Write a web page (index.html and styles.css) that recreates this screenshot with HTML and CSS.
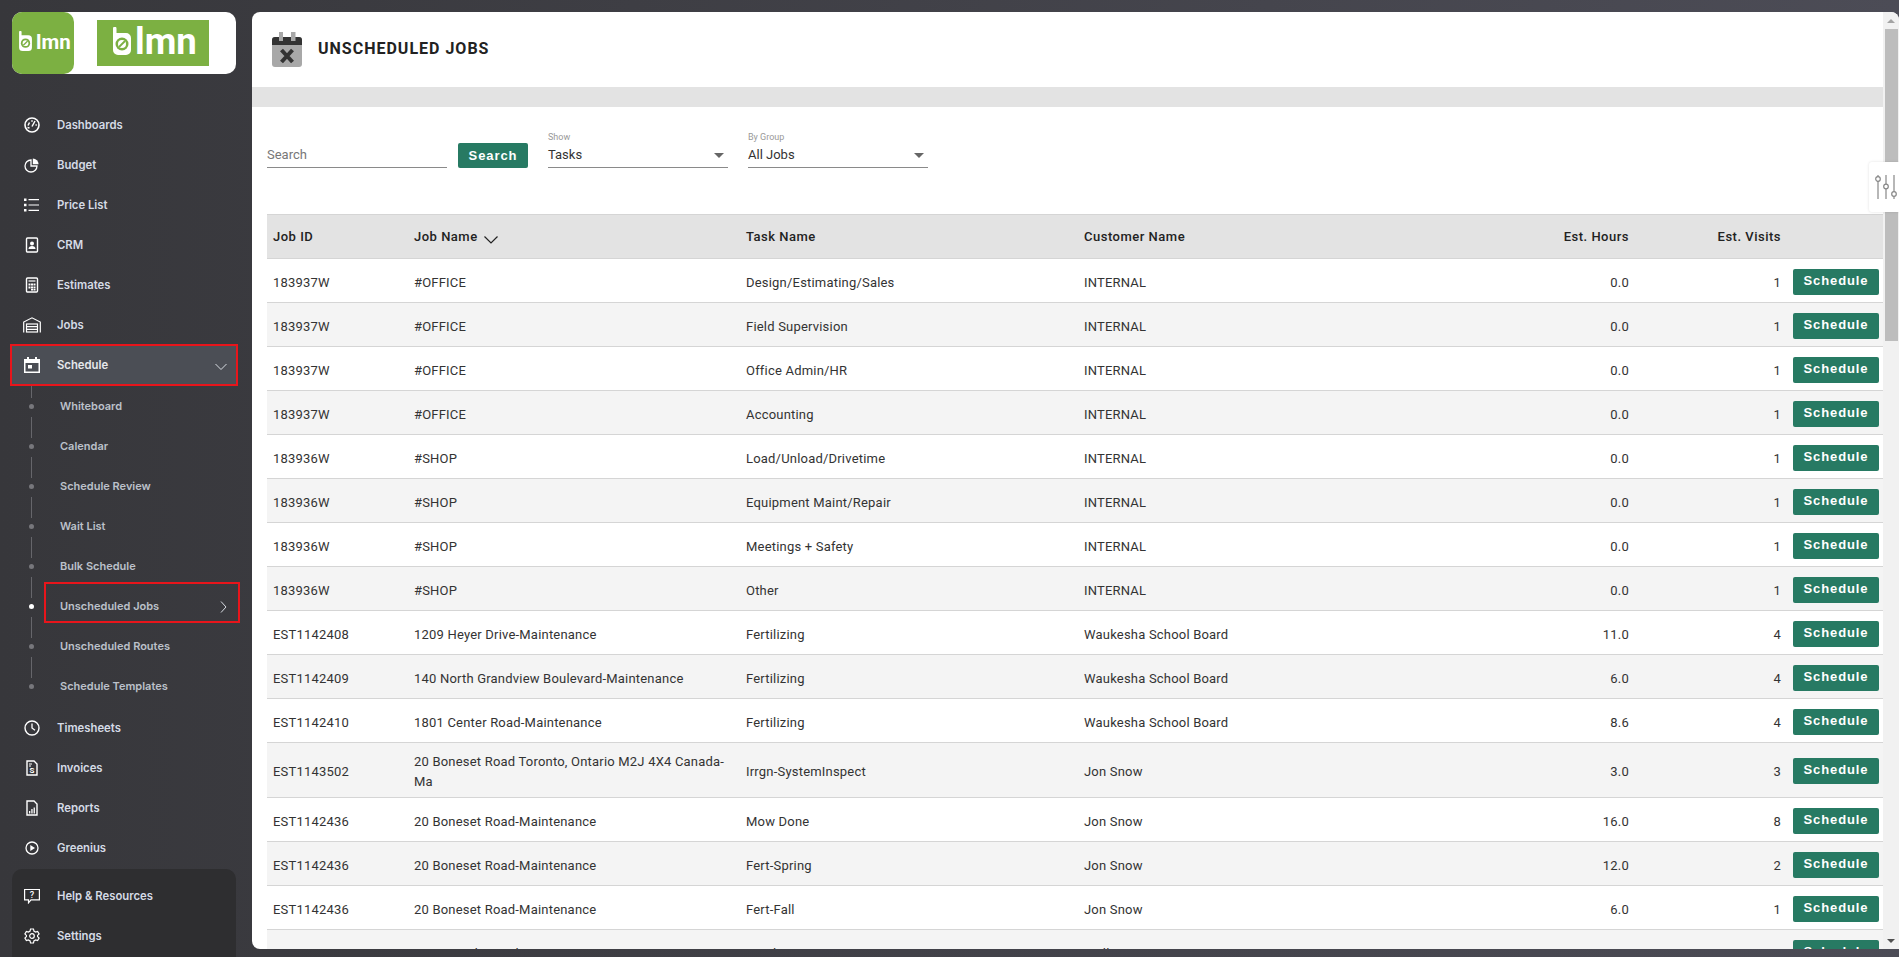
FILE: index.html
```html
<!DOCTYPE html>
<html lang="en">
<head>
    <meta charset="UTF-8">
    <meta name="viewport" content="width=device-width, initial-scale=1.0">
    <title>Unscheduled Jobs</title>
    <link rel="stylesheet" href="styles.css">
</head>
<body>
    <aside class="sidebar">
        <div class="logo-card">
            <div class="logo-square">
                <svg class="logo-b-small" viewBox="0 0 18 28"><path fill="#fff" d="M0 1.500a1.750 1.750 0 0 1 3.500 0V6H13a5 5 0 0 1 5 5v12a5 5 0 0 1-5 5H5a5 5 0 0 1-5-5z"/><circle cx="9" cy="17" r="6.500" fill="#7cb042"/><circle cx="9" cy="17" r="4" fill="#fff"/><path stroke="#7cb042" stroke-width="1.800" d="M6 20l6-6"/></svg>
                <span class="logo-text-small">lmn</span>
            </div>
            <div class="logo-wide">
                <svg class="logo-b-large" viewBox="0 0 18 28"><path fill="#fff" d="M0 1.500a1.750 1.750 0 0 1 3.500 0V6H13a5 5 0 0 1 5 5v12a5 5 0 0 1-5 5H5a5 5 0 0 1-5-5z"/><circle cx="9" cy="17" r="6.500" fill="#7cb042"/><circle cx="9" cy="17" r="4" fill="#fff"/><path stroke="#7cb042" stroke-width="1.800" d="M6 20l6-6"/></svg>
                <span class="logo-text-large">lmn</span>
            </div>
        </div>

        <nav class="nav">
            <a class="nav-item"><svg class="nav-icon" viewBox="0 0 16 16"><circle cx="8" cy="8" r="7" fill="none" stroke="#fff" stroke-width="1.600"/><path fill="none" stroke="#fff" stroke-width="1.500" d="M8 9.500l3-5.500M4 8.500l1.500-3M8 3.200v1.500M12.800 8h-1.300M3.500 10.500l2 .5"/></svg>Dashboards</a>
            <a class="nav-item"><svg class="nav-icon" viewBox="0 0 16 16"><path fill="none" stroke="#fff" stroke-width="1.300" d="M7 3a6 6 0 1 0 6 6H7z"/><path fill="#fff" d="M8.800 1.500a6 6 0 0 1 5.800 5.800H8.800z"/></svg>Budget</a>
            <a class="nav-item"><svg class="nav-icon" viewBox="0 0 16 16"><path fill="#fff" d="M0 1.500h2.500v2.500H0zM0 6.800h2.500v2.500H0zM0 12h2.500v2.500H0z"/><path stroke="#fff" stroke-width="1.200" d="M4.500 2.700H15M4.500 8H15M4.500 13.300H15"/></svg>Price List</a>
            <a class="nav-item"><svg class="nav-icon" viewBox="0 0 16 16"><rect x="2.500" y="1" width="11" height="14" rx="1" fill="none" stroke="#fff" stroke-width="1.400"/><circle cx="8" cy="6.500" r="2" fill="#fff"/><path fill="#fff" d="M4.500 12c0-2 1.500-3 3.500-3s3.500 1 3.500 3z"/></svg>CRM</a>
            <a class="nav-item"><svg class="nav-icon" viewBox="0 0 16 16"><rect x="2.500" y="1" width="11" height="14" rx="1" fill="none" stroke="#fff" stroke-width="1.400"/><path stroke="#fff" stroke-width="1.200" d="M4.500 4h7"/><path fill="#fff" d="M4.500 6.500h2v2h-2zM7 6.500h2v2H7zM9.500 6.500h2v2h-2zM4.500 9.500h2v2h-2zM7 9.500h2v2H7zM9.500 9.500h2v2h-2zM7 12h2v1.500H7zM9.500 12h2v1.500h-2z"/></svg>Estimates</a>
            <a class="nav-item"><svg class="nav-icon nav-icon-wide" viewBox="0 0 18 16"><path fill="none" stroke="#fff" stroke-width="1.200" d="M.7 15.500V5L9 .8 17.300 5v10.500"/><rect x="3.500" y="7" width="11" height="8" fill="none" stroke="#fff" stroke-width="1.200"/><path stroke="#fff" stroke-width="1.200" d="M3.500 9.700h11M3.500 12.300h11"/></svg>Jobs</a>

            <a class="nav-item nav-active"><svg class="nav-icon" viewBox="0 0 16 16"><path fill="#fff" d="M3 0h2v2h6V0h2v2h3v14H0V2h3zM1.500 6v8.500h13V6z"/><rect x="4" y="8" width="4" height="3.500" fill="#fff"/></svg>Schedule
                <svg class="nav-chevron-down" viewBox="0 0 12 8"><path fill="none" stroke="#d8dce3" stroke-width="1" d="M.5 1L6 6.500 11.500 1"/></svg>
            </a>
            <a class="sub-item">Whiteboard</a>
            <a class="sub-item">Calendar</a>
            <a class="sub-item">Schedule Review</a>
            <a class="sub-item">Wait List</a>
            <a class="sub-item">Bulk Schedule</a>
            <a class="sub-item sub-current">Unscheduled Jobs
                <svg class="sub-chevron" viewBox="0 0 7 12"><path fill="none" stroke="#d8dce3" stroke-width="1" d="M1 .5L6 6l-5 5.500"/></svg>
                <span class="mark-box"></span>
            </a>
            <a class="sub-item">Unscheduled Routes</a>
            <a class="sub-item">Schedule Templates</a>

            <a class="nav-item nav-after-sub"><svg class="nav-icon" viewBox="0 0 16 16"><circle cx="8" cy="8" r="7" fill="none" stroke="#fff" stroke-width="1.400"/><path fill="none" stroke="#fff" stroke-width="1.300" d="M8 3.500V8l3 2.200"/></svg>Timesheets</a>
            <a class="nav-item"><svg class="nav-icon" viewBox="0 0 16 16"><path fill="none" stroke="#fff" stroke-width="1.400" d="M3 1h7l3 3v11H3z"/><text class="icon-dollar" x="8" y="13" text-anchor="middle">S</text><path stroke="#fff" d="M5 4h3M5 6h2"/></svg>Invoices</a>
            <a class="nav-item"><svg class="nav-icon" viewBox="0 0 16 16"><path fill="none" stroke="#fff" stroke-width="1.400" d="M3 1h7l3 3v11H3z"/><path fill="#fff" d="M5 11h1.300v2.500H5zM7.300 9h1.300v4.500H7.300zM9.600 7.500h1.300v6H9.600z"/></svg>Reports</a>
            <a class="nav-item"><svg class="nav-icon" viewBox="0 0 16 16"><circle cx="8" cy="8" r="6" fill="none" stroke="#fff" stroke-width="1.300"/><path fill="#fff" d="M6.300 5l4.700 3-4.700 3z"/></svg>Greenius</a>
        </nav>

        <div class="nav-bottom">
            <a class="nav-item"><svg class="nav-icon" viewBox="0 0 16 16"><path fill="none" stroke="#fff" stroke-width="1.200" d="M.6 1.500h14.800v10.300H7l-2.500 3v-3H.6z"/><text class="icon-help" x="8" y="9.500" text-anchor="middle">?</text></svg>Help &amp; Resources</a>
            <a class="nav-item"><svg class="nav-icon" viewBox="0 0 16 16"><path fill="none" stroke="#fff" stroke-width="1.200" d="M6.500 1h3l.4 2 1.700 1 2-.6 1.500 2.600-1.500 1.400v1.200l1.500 1.400-1.500 2.600-2-.6-1.700 1-.4 2h-3l-.4-2-1.700-1-2 .6L.9 10.000l1.500-1.400V7.400L.9 6l1.500-2.600 2 .6 1.700-1z"/><circle cx="8" cy="8" r="2.300" fill="none" stroke="#fff" stroke-width="1.200"/></svg>Settings</a>
        </div>
    </aside>

    <main class="main">
        <div class="content">
            <header class="page-header">
                <svg class="page-icon" viewBox="0 0 30 35"><rect x="0" y="5" width="30" height="30" rx="3" fill="#a8a8a8"/><path fill="#333" d="M0 13V8a3 3 0 0 1 3-3h24a3 3 0 0 1 3 3v5z"/><path fill="#a8a8a8" d="M7 0h4v9H7zM19 0h4.500v9H19z"/><path stroke="#333" stroke-width="4" d="M9.500 18l11 12M20.500 18l-11 12"/></svg>
                <h1 class="page-title">Unscheduled Jobs</h1>
            </header>
            <div class="band"></div>

            <div class="filters">
                <div class="field field-search"><div class="field-value field-placeholder">Search</div></div>
                <button class="btn btn-search">Search</button>
                <div class="field">
                    <label class="field-label">Show</label>
                    <div class="field-value">Tasks<span class="caret"></span></div>
                </div>
                <div class="field">
                    <label class="field-label">By Group</label>
                    <div class="field-value">All Jobs<span class="caret"></span></div>
                </div>
            </div>

            <table class="jobs">
                <colgroup>
                    <col class="col-id"><col class="col-name"><col class="col-task"><col class="col-customer"><col class="col-hours"><col class="col-visits"><col class="col-action">
                </colgroup>
                <thead>
                    <tr>
                        <th>Job ID</th>
                        <th>Job Name <svg class="sort-icon" viewBox="0 0 14 8"><path fill="none" stroke="#222" stroke-width="1.200" d="M.5.500L7 7 13.500.500"/></svg></th>
                        <th>Task Name</th>
                        <th>Customer Name</th>
                        <th class="num">Est. Hours</th>
                        <th class="num">Est. Visits</th>
                        <th></th>
                    </tr>
                </thead>
                <tbody>
                    <tr><td>183937W</td><td>#OFFICE</td><td>Design/Estimating/Sales</td><td>INTERNAL</td><td class="num">0.0</td><td class="num">1</td><td><button class="btn btn-row">Schedule</button></td></tr>
                    <tr><td>183937W</td><td>#OFFICE</td><td>Field Supervision</td><td>INTERNAL</td><td class="num">0.0</td><td class="num">1</td><td><button class="btn btn-row">Schedule</button></td></tr>
                    <tr><td>183937W</td><td>#OFFICE</td><td>Office Admin/HR</td><td>INTERNAL</td><td class="num">0.0</td><td class="num">1</td><td><button class="btn btn-row">Schedule</button></td></tr>
                    <tr><td>183937W</td><td>#OFFICE</td><td>Accounting</td><td>INTERNAL</td><td class="num">0.0</td><td class="num">1</td><td><button class="btn btn-row">Schedule</button></td></tr>
                    <tr><td>183936W</td><td>#SHOP</td><td>Load/Unload/Drivetime</td><td>INTERNAL</td><td class="num">0.0</td><td class="num">1</td><td><button class="btn btn-row">Schedule</button></td></tr>
                    <tr><td>183936W</td><td>#SHOP</td><td>Equipment Maint/Repair</td><td>INTERNAL</td><td class="num">0.0</td><td class="num">1</td><td><button class="btn btn-row">Schedule</button></td></tr>
                    <tr><td>183936W</td><td>#SHOP</td><td>Meetings + Safety</td><td>INTERNAL</td><td class="num">0.0</td><td class="num">1</td><td><button class="btn btn-row">Schedule</button></td></tr>
                    <tr><td>183936W</td><td>#SHOP</td><td>Other</td><td>INTERNAL</td><td class="num">0.0</td><td class="num">1</td><td><button class="btn btn-row">Schedule</button></td></tr>
                    <tr><td>EST1142408</td><td>1209 Heyer Drive-Maintenance</td><td>Fertilizing</td><td>Waukesha School Board</td><td class="num">11.0</td><td class="num">4</td><td><button class="btn btn-row">Schedule</button></td></tr>
                    <tr><td>EST1142409</td><td>140 North Grandview Boulevard-Maintenance</td><td>Fertilizing</td><td>Waukesha School Board</td><td class="num">6.0</td><td class="num">4</td><td><button class="btn btn-row">Schedule</button></td></tr>
                    <tr><td>EST1142410</td><td>1801 Center Road-Maintenance</td><td>Fertilizing</td><td>Waukesha School Board</td><td class="num">8.6</td><td class="num">4</td><td><button class="btn btn-row">Schedule</button></td></tr>
                    <tr><td>EST1143502</td><td>20 Boneset Road Toronto, Ontario M2J 4X4 Canada-Ma</td><td>Irrgn-SystemInspect</td><td>Jon Snow</td><td class="num">3.0</td><td class="num">3</td><td><button class="btn btn-row">Schedule</button></td></tr>
                    <tr><td>EST1142436</td><td>20 Boneset Road-Maintenance</td><td>Mow Done</td><td>Jon Snow</td><td class="num">16.0</td><td class="num">8</td><td><button class="btn btn-row">Schedule</button></td></tr>
                    <tr><td>EST1142436</td><td>20 Boneset Road-Maintenance</td><td>Fert-Spring</td><td>Jon Snow</td><td class="num">12.0</td><td class="num">2</td><td><button class="btn btn-row">Schedule</button></td></tr>
                    <tr><td>EST1142436</td><td>20 Boneset Road-Maintenance</td><td>Fert-Fall</td><td>Jon Snow</td><td class="num">6.0</td><td class="num">1</td><td><button class="btn btn-row">Schedule</button></td></tr>
                    <tr><td>EST1143417</td><td>3000 South Westlawn-Maintenance</td><td>Fertilizing</td><td>Mall Manager</td><td class="num">26.4</td><td class="num">4</td><td><button class="btn btn-row">Schedule</button></td></tr>
                </tbody>
            </table>
        </div>

        <div class="scrollbar">
            <div class="scroll-btn"><span class="arrow-up"></span></div>
            <div class="scroll-thumb"></div>
            <div class="scroll-rest"></div>
            <div class="scroll-btn"><span class="arrow-down"></span></div>
        </div>

        <div class="settings-tab">
            <svg viewBox="0 0 22 26" class="settings-icon"><path stroke="#888" stroke-width="1.200" d="M3 1v1.500M3 7v18M11 1v9M11 15v10M19 1v16.500M19 22.500V25"/><g fill="none" stroke="#888" stroke-width="1.200"><circle cx="3" cy="5" r="2.300"/><circle cx="11" cy="12.500" r="2.300"/><circle cx="19" cy="20" r="2.300"/></g></svg>
        </div>
    </main>
</body>
</html>
```

FILE: styles.css
```css
* {
    box-sizing: border-box;
}
body {
    margin: 0;
    height: 957px;
    overflow: hidden;
    display: flex;
    font-family: 'Roboto', sans-serif;
    background: linear-gradient(90deg, #37373b, #4c4c56);
}

/* sidebar */
.sidebar {
    width: 252px;
    flex-shrink: 0;
    display: flex;
    flex-direction: column;
    padding-top: 12px;
    font-family: 'Inter', sans-serif;
}
.logo-card {
    width: 224px;
    height: 62px;
    margin-left: 12px;
    background: #fff;
    border-radius: 10px;
    display: flex;
    align-items: center;
}
.logo-square {
    width: 62px;
    height: 62px;
    padding-left: 6px;
    background: #7cb042;
    border-radius: 10px;
    display: flex;
    align-items: center;
    gap: 3px;
    color: #fff;
}
.logo-b-small {
    width: 15px;
    height: 20px;
    margin-top: -5px;
}
.logo-text-small {
    font: 700 20.5px/1 'Roboto', sans-serif;
    margin-top: -1px;
}
.logo-wide {
    width: 112px;
    height: 46px;
    margin-left: 23px;
    padding-left: 16px;
    background: #7cb042;
    display: flex;
    align-items: center;
    gap: 4px;
    color: #fff;
}
.logo-b-large {
    width: 18px;
    height: 28px;
    margin-top: -4px;
}
.logo-text-large {
    font: 700 36.5px/1 'Roboto', sans-serif;
    margin-top: -1px;
}
.nav {
    margin-top: 31px;
    display: flex;
    flex-direction: column;
}
.nav-item {
    height: 40px;
    margin: 0 16px 0 12px;
    padding-left: 12px;
    display: flex;
    align-items: center;
    position: relative;
    font-size: 11.3px;
    font-weight: 600;
    color: #d5dbe6;
}
.nav-icon {
    width: 16px;
    height: 16px;
    margin-right: 17px;
    flex-shrink: 0;
}
.nav-icon-wide {
    width: 18px;
    margin-left: -1px;
    margin-right: 16px;
}
.nav-active {
    height: 38px;
    margin-top: 1px;
    margin-bottom: 2px;
    background: #4b4e55;
    outline: 2px solid #e8151b;
    color: #e6e8ec;
    z-index: 1;
}
.nav-chevron-down {
    position: absolute;
    left: 203px;
    top: 17px;
    width: 12px;
    height: 8px;
}
.nav-after-sub {
    margin-top: 2px;
}
.sub-item {
    height: 40px;
    padding-left: 60px;
    display: flex;
    align-items: center;
    position: relative;
    font-size: 11px;
    font-weight: 600;
    color: #bcc1ca;
}
/* timeline dot and line on the left of the sub menu */
.sub-item::before {
    content: "";
    position: absolute;
    left: 29px;
    top: 18px;
    width: 5px;
    height: 5px;
    border-radius: 50%;
    background: #77777c;
}
.sub-item::after {
    content: "";
    position: absolute;
    left: 31px;
    top: -9px;
    width: 1px;
    height: 21px;
    background: #66666b;
}
.sub-current::before {
    background: #fff;
}
.sub-chevron {
    position: absolute;
    left: 220px;
    top: 15px;
    width: 7px;
    height: 12px;
}
.mark-box {
    position: absolute;
    left: 44px;
    top: -4px;
    width: 196px;
    height: 41px;
    border: 2px solid #e8151b;
}
.nav-bottom {
    margin: auto 16px 0 12px;
    height: 88px;
    padding-top: 7px;
    background: #2e2e30;
    border-radius: 10px 10px 0 0;
}
.nav-bottom .nav-item {
    margin-left: 0;
    margin-right: 0;
}
.icon-dollar {
    font: 700 8px 'Roboto', sans-serif;
    fill: #fff;
}
.icon-help {
    font: 500 9px 'Roboto', sans-serif;
    fill: #fff;
}

/* main panel */
.main {
    flex: 1;
    min-width: 0;
    height: 937px;
    margin-top: 12px;
    display: flex;
    position: relative;
    background: #fff;
    border-radius: 8px;
}
.content {
    flex: 1;
    min-width: 0;
    overflow: hidden;
    border-radius: 8px 0 0 8px;
}
.page-header {
    height: 75px;
    padding-left: 20px;
    display: flex;
    align-items: center;
}
.page-icon {
    width: 30px;
    height: 35px;
    margin-right: 16px;
}
.page-title {
    margin: -3px 0 0;
    font-size: 16px;
    font-weight: 700;
    letter-spacing: 1px;
    color: #222;
    text-transform: uppercase;
}
.band {
    height: 20px;
    background: #e3e3e3;
}
.filters {
    height: 107px;
    padding: 24px 0 46px 15px;
    display: flex;
    align-items: flex-end;
}
.field {
    width: 180px;
    margin-right: 20px;
}
.field-search {
    margin-right: 11px;
}
.field-label {
    display: block;
    height: 10px;
    margin-bottom: 1px;
    font-size: 9px;
    line-height: 10px;
    color: #999;
}
.field-value {
    height: 25px;
    line-height: 23px;
    font-size: 13px;
    color: #333;
    border-bottom: 1px solid #8a8a8a;
    position: relative;
}
.field-placeholder {
    color: #777;
}
.caret {
    position: absolute;
    right: 4px;
    top: 10px;
    border-left: 5px solid transparent;
    border-right: 5px solid transparent;
    border-top: 5px solid #666;
}
.btn {
    border: none;
    border-radius: 2px;
    background: #277a63;
    color: #fff;
    font-family: 'Liberation Sans', sans-serif;
    font-size: 13px;
    font-weight: 700;
    letter-spacing: 0.9px;
    padding: 0;
}
.btn-search {
    width: 70px;
    height: 25px;
    margin-right: 20px;
    flex-shrink: 0;
}
.btn-row {
    width: 86px;
    height: 26px;
    display: block;
    margin-top: -2px;
    padding-bottom: 3px;
}

/* table */
.jobs {
    width: 1616px;
    margin-left: 15px;
    table-layout: fixed;
    border-collapse: separate;
    border-spacing: 0;
    font-size: 13px;
    letter-spacing: 0.2px;
    color: #333;
}
.col-id { width: 141px; }
.col-name { width: 332px; }
.col-task { width: 338px; }
.col-customer { width: 402px; }
.col-hours { width: 155px; }
.col-visits { width: 152px; }
.col-action { width: 96px; }
.jobs th {
    height: 45px;
    padding: 0 6px;
    text-align: left;
    font-weight: 500;
    letter-spacing: 0.5px;
    color: #222;
    background: #e3e3e3;
    border-top: 1px solid #d5d5d5;
    border-bottom: 1px solid #d5d5d5;
}
.jobs td {
    height: 44px;
    padding: 9px 6px 5px;
    line-height: 20px;
    border-bottom: 1px solid #d5d5d5;
}
.jobs tbody tr:nth-child(even) td {
    background: #f4f4f4;
}
.jobs .num {
    text-align: right;
}
.sort-icon {
    width: 14px;
    height: 8px;
    margin-left: 3px;
    vertical-align: -3px;
}

/* fake scrollbar */
.scrollbar {
    width: 16px;
    flex-shrink: 0;
    display: flex;
    flex-direction: column;
    background: #f1f1f1;
    border-radius: 0 8px 0 0;
}
.scroll-btn {
    height: 17px;
    display: flex;
    align-items: center;
    justify-content: center;
}
.arrow-up {
    border-left: 4px solid transparent;
    border-right: 4px solid transparent;
    border-bottom: 4px solid #a3a3a3;
}
.arrow-down {
    border-left: 4px solid transparent;
    border-right: 4px solid transparent;
    border-top: 4px solid #505050;
}
.scroll-thumb {
    height: 312px;
    margin: 0 1px 0 2px;
    background: #bdbdbd;
}
.scroll-rest {
    flex: 1;
}
.settings-tab {
    position: absolute;
    right: 0;
    top: 150px;
    width: 30px;
    height: 50px;
    padding-left: 3px;
    display: flex;
    align-items: center;
    justify-content: center;
    background: #fff;
    border-radius: 3px 0 0 3px;
    box-shadow: 0 0 3px rgba(0, 0, 0, 0.12);
}
.settings-icon {
    width: 22px;
    height: 26px;
}
```
